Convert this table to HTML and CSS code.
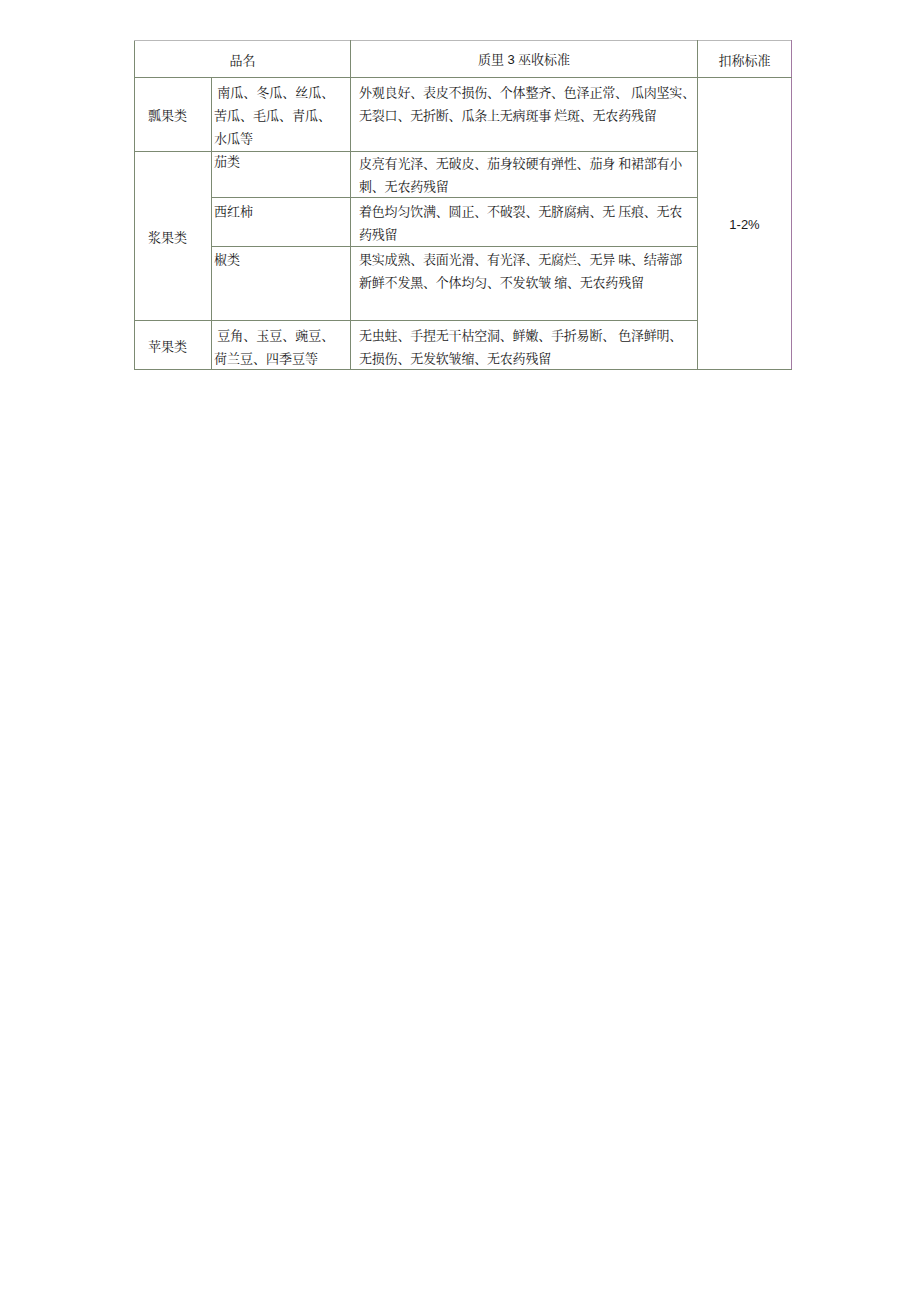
FILE: index.html
```html
<!DOCTYPE html>
<html lang="zh">
<head>
<meta charset="utf-8">
<title>品名 质量验收标准</title>
<link rel="stylesheet" href="styles.css">
</head>
<body>
<table class="std">
  <colgroup>
    <col class="c1"><col class="c2"><col class="c3"><col class="c4">
  </colgroup>
  <tr class="r-head">
    <td colspan="2" class="head">品名</td>
    <td class="head">质里 <span class="num">3</span> 巫收标准</td>
    <td class="head last">扣称标准</td>
  </tr>
  <tr class="r-a">
    <td class="cat">瓢果类</td>
    <td class="sub t1">&nbsp;南瓜、冬瓜、丝瓜、<br>苦瓜、毛瓜、青瓜、<br>水瓜等</td>
    <td class="desc t1">外观良好、表皮不损伤、个体整齐、色泽正常、 瓜肉坚实、<br>无裂口、无折断、瓜条上无病斑事 烂斑、无农药残留</td>
    <td rowspan="5" class="pct last"><span class="num">1-2%</span></td>
  </tr>
  <tr class="r-b">
    <td rowspan="3" class="cat">浆果类</td>
    <td class="sub t0">茄类</td>
    <td class="desc t4">皮亮有光泽、无破皮、茄身较硬有弹性、茄身 和裙部有小<br>刺、无农药残留</td>
  </tr>
  <tr class="r-c">
    <td class="sub t3">西红柿</td>
    <td class="desc t3">着色均匀饮满、圆正、不破裂、无脐腐病、无 压痕、无农<br>药残留</td>
  </tr>
  <tr class="r-d">
    <td class="sub t2">椒类</td>
    <td class="desc t2">果实成熟、表面光滑、有光泽、无腐烂、无异 味、结蒂部<br>新鲜不发黑、个体均匀、不发软皱 缩、无农药残留</td>
  </tr>
  <tr class="r-e">
    <td class="cat">苹果类</td>
    <td class="sub t1">&nbsp;豆角、玉豆、豌豆、<br>荷兰豆、四季豆等</td>
    <td class="desc t1">无虫蛀、手捏无干枯空洞、鲜嫩、手折易断、 色泽鲜明、<br>无损伤、无发软皱缩、无农药残留</td>
  </tr>
</table>
</body>
</html>
```

FILE: styles.css
```css
html, body {
  margin: 0;
  padding: 0;
  background: #ffffff;
}

body {
  font-family: "Noto Serif CJK SC", "Noto Sans CJK SC", serif;
  font-size: 13px;
  color: #1a1a1a;
}

.std {
  border-collapse: collapse;
  table-layout: fixed;
  width: 657px;
  margin: 40px 0 0 134px;
}

.c1 { width: 77px; }
.c2 { width: 139px; }
.c3 { width: 347px; }
.c4 { width: 94px; }

.std td {
  border: 1px solid #7c8a72;
  padding: 0;
  line-height: 23px;
  white-space: nowrap;
  overflow: hidden;
}

.std tr.r-head td {
  border-top-color: #b9b9b9;
}

.std td.last {
  border-right-color: #a27aa2;
}

.r-head { height: 37px; }
.r-a { height: 74px; }
.r-b { height: 46px; }
.r-c { height: 49px; }
.r-d { height: 74px; }
.r-e { height: 49px; }

.head {
  text-align: center;
  vertical-align: middle;
}

.num {
  font-family: "Liberation Sans", Arial, sans-serif;
}

.cat {
  text-align: left;
  vertical-align: middle;
  padding-left: 13px !important;
}

.sub {
  vertical-align: top;
  padding-left: 2px !important;
}

.desc {
  vertical-align: top;
  padding-left: 8px !important;
  letter-spacing: -0.2px;
}

.t0 { padding-top: 0 !important; line-height: 17px !important; }
.t1 { padding-top: 2px !important; }
.t2 { padding-top: 0 !important; }
.t3 { padding-top: 1px !important; }
.t4 { padding-top: 0 !important; line-height: 22.5px !important; }

.pct {
  text-align: center;
  vertical-align: middle;
}
```
